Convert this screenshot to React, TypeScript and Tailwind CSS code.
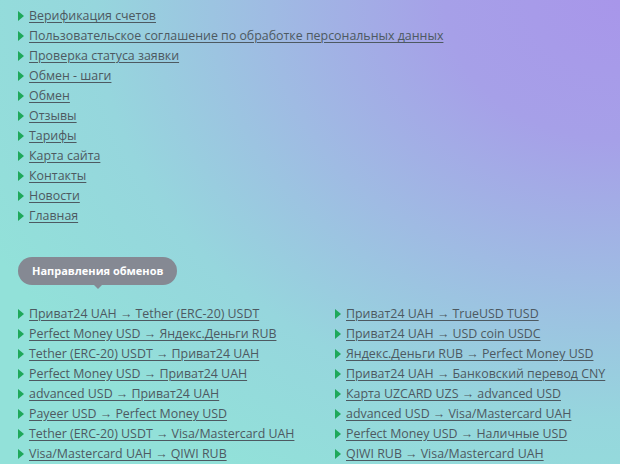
import React from "react";

const menu = [
  "Верификация счетов",
  "Пользовательское соглашение по обработке персональных данных",
  "Проверка статуса заявки",
  "Обмен - шаги",
  "Обмен",
  "Отзывы",
  "Тарифы",
  "Карта сайта",
  "Контакты",
  "Новости",
  "Главная",
];

const col1 = [
  "Приват24 UAH → Tether (ERC-20) USDT",
  "Perfect Money USD → Яндекс.Деньги RUB",
  "Tether (ERC-20) USDT → Приват24 UAH",
  "Perfect Money USD → Приват24 UAH",
  "advanced USD → Приват24 UAH",
  "Payeer USD → Perfect Money USD",
  "Tether (ERC-20) USDT → Visa/Mastercard UAH",
  "Visa/Mastercard UAH → QIWI RUB",
];

const col2 = [
  "Приват24 UAH → TrueUSD TUSD",
  "Приват24 UAH → USD coin USDC",
  "Яндекс.Деньги RUB → Perfect Money USD",
  "Приват24 UAH → Банковский перевод CNY",
  "Карта UZCARD UZS → advanced USD",
  "advanced USD → Visa/Mastercard UAH",
  "Perfect Money USD → Наличные USD",
  "QIWI RUB → Visa/Mastercard UAH",
];

function Item({ text }: { text: string }) {
  return (
    <li className="flex items-center h-5">
      <span className="w-0 h-0 border-y-[5px] border-y-transparent border-l-[6px] border-l-[#1ea85a] mr-[5px] shrink-0" />
      <a className="underline underline-offset-2 decoration-[1px] text-[#4d5961] whitespace-nowrap cursor-pointer">{text}</a>
    </li>
  );
}

export default function App() {
  return (
    <div
      className="w-[620px] h-[464px] overflow-hidden text-[12.4px] leading-5 bg-[radial-gradient(ellipse_700px_560px_at_100%_0%,#a896ea_0%,#a6a0e8_25%,#9fbbe3_50%,#96d6dd_75%,#92e1d9_100%)] bg-[#92e1d9]"
      style={{ fontFamily: '"Open Sans", "Noto Sans", sans-serif' }}
    >
      <ul className="pt-[6px] pl-[18px]">
        {menu.map((m) => (
          <Item key={m} text={m} />
        ))}
      </ul>
      <div className="pl-[18px] mt-[31px]">
        <div className="relative inline-flex items-center h-[28px] px-[14px] rounded-full bg-[#858993] text-white font-bold text-[11px]">
          Направления обменов
          <span className="absolute left-[76px] -bottom-[4px] w-0 h-0 border-x-[4px] border-x-transparent border-t-[4px] border-t-[#858993]" />
        </div>
      </div>
      <div className="flex pl-[18px] mt-[19px]">
        <ul className="w-[317px]">
          {col1.map((m) => (
            <Item key={m} text={m} />
          ))}
        </ul>
        <ul>
          {col2.map((m) => (
            <Item key={m} text={m} />
          ))}
        </ul>
      </div>
    </div>
  );
}
